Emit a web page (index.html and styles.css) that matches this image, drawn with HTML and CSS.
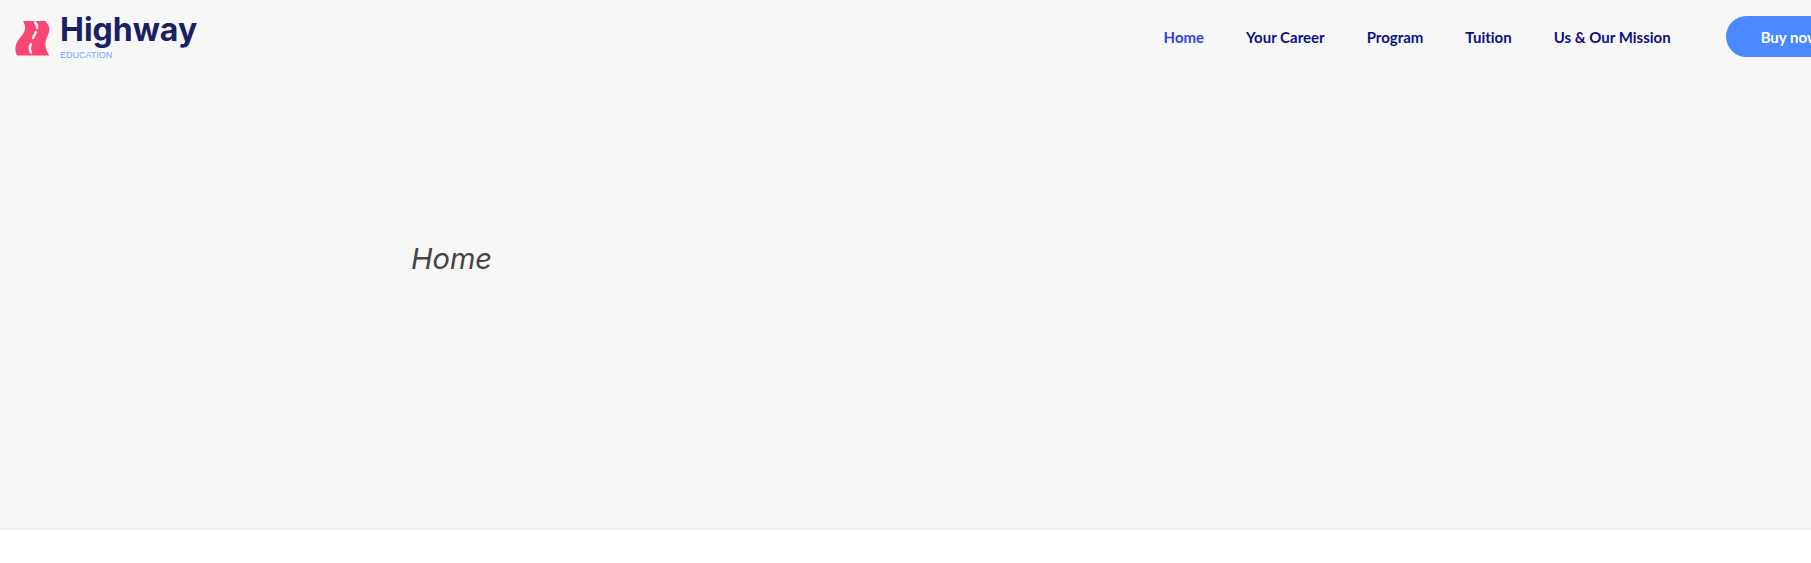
FILE: index.html
```html
<!DOCTYPE html>
<html lang="en">
<head>
    <meta charset="UTF-8">
    <meta name="viewport" content="width=device-width, initial-scale=1.0">
    <title>Highway Education</title>
    <link rel="stylesheet" href="styles.css">
</head>
<body>
    <header class="header">
        <a class="logo" href="#">
            <svg class="logo-road" viewBox="0 0 36 36" aria-hidden="true">
                <path fill="#fb4673" d="M8 1H30C34.500 5 36 10 32.500 16C29 23 30 29 34.500 35.500H2C-1 29 0 24 5 18C10 12 12 8 8 1Z"/>
                <path class="lane" d="M20 2.500Q22.500 4.500 22 8"/>
                <path class="lane" d="M21 12L18 18"/>
                <path class="lane" d="M16 24Q13.500 28 16 32.500"/>
            </svg>
            <span class="logo-text">
                <span class="logo-name">Highway</span>
                <span class="logo-sub">EDUCATION</span>
            </span>
        </a>
        <nav class="nav">
            <a class="nav-link active" href="#">Home</a>
            <a class="nav-link" href="#">Your Career</a>
            <a class="nav-link" href="#">Program</a>
            <a class="nav-link" href="#">Tuition</a>
            <a class="nav-link" href="#">Us &amp; Our Mission</a>
            <button class="buy-button" type="button">Buy now</button>
        </nav>
    </header>

    <section class="hero">
        <h1 class="hero-title">Home</h1>
    </section>
</body>
</html>
```
FILE: styles.css
```css
body {
    margin: 0;
    font-family: Lato, sans-serif;
    font-variant-ligatures: none;
    background: #fff;
    overflow-x: hidden;
}
.header {
    display: flex;
    align-items: center;
    justify-content: space-between;
    height: 73px;
    padding-left: 15px;
    background: #f7f7f7;
}
.logo {
    display: flex;
    align-items: center;
    gap: 9px;
    padding-top: 2px;
    text-decoration: none;
}
.logo-road {
    width: 36px;
    height: 36px;
}
.lane {
    fill: none;
    stroke: #fff;
    stroke-width: 2.4;
    stroke-linecap: round;
}
.logo-text {
    display: flex;
    flex-direction: column;
    gap: 4px;
}
.logo-name {
    font-family: Inter, sans-serif;
    font-size: 32px;
    font-weight: 700;
    line-height: 30px;
    color: #1a2066;
}
.logo-sub {
    font-family: "Liberation Sans", Arial, sans-serif;
    font-size: 9px;
    line-height: 12px;
    color: #74a5ff;
}
/* the buy button runs past the right edge */
.nav {
    display: flex;
    align-items: center;
    gap: 42px;
    margin-right: -43px;
}
.nav-link {
    font-size: 15px;
    font-weight: 700;
    line-height: 18px;
    white-space: nowrap;
    text-decoration: none;
    color: #0d1180;
}
.nav-link.active {
    color: #3a3fd8;
}
.buy-button {
    height: 41px;
    margin-left: 13px;
    padding: 0 35px;
    border: none;
    border-radius: 21px;
    background: #4a89ff;
    color: #fff;
    font-family: inherit;
    font-size: 15px;
    font-weight: 700;
    white-space: nowrap;
    cursor: pointer;
}
.hero {
    padding: 166px 0 249px 411px;
    background: #f7f7f7;
    border-bottom: 2px solid #f2f2f2;
}
.hero-title {
    margin: 0;
    font-family: Inter, sans-serif;
    font-size: 29px;
    font-style: italic;
    font-weight: 400;
    line-height: 40px;
    color: #444;
}
```
